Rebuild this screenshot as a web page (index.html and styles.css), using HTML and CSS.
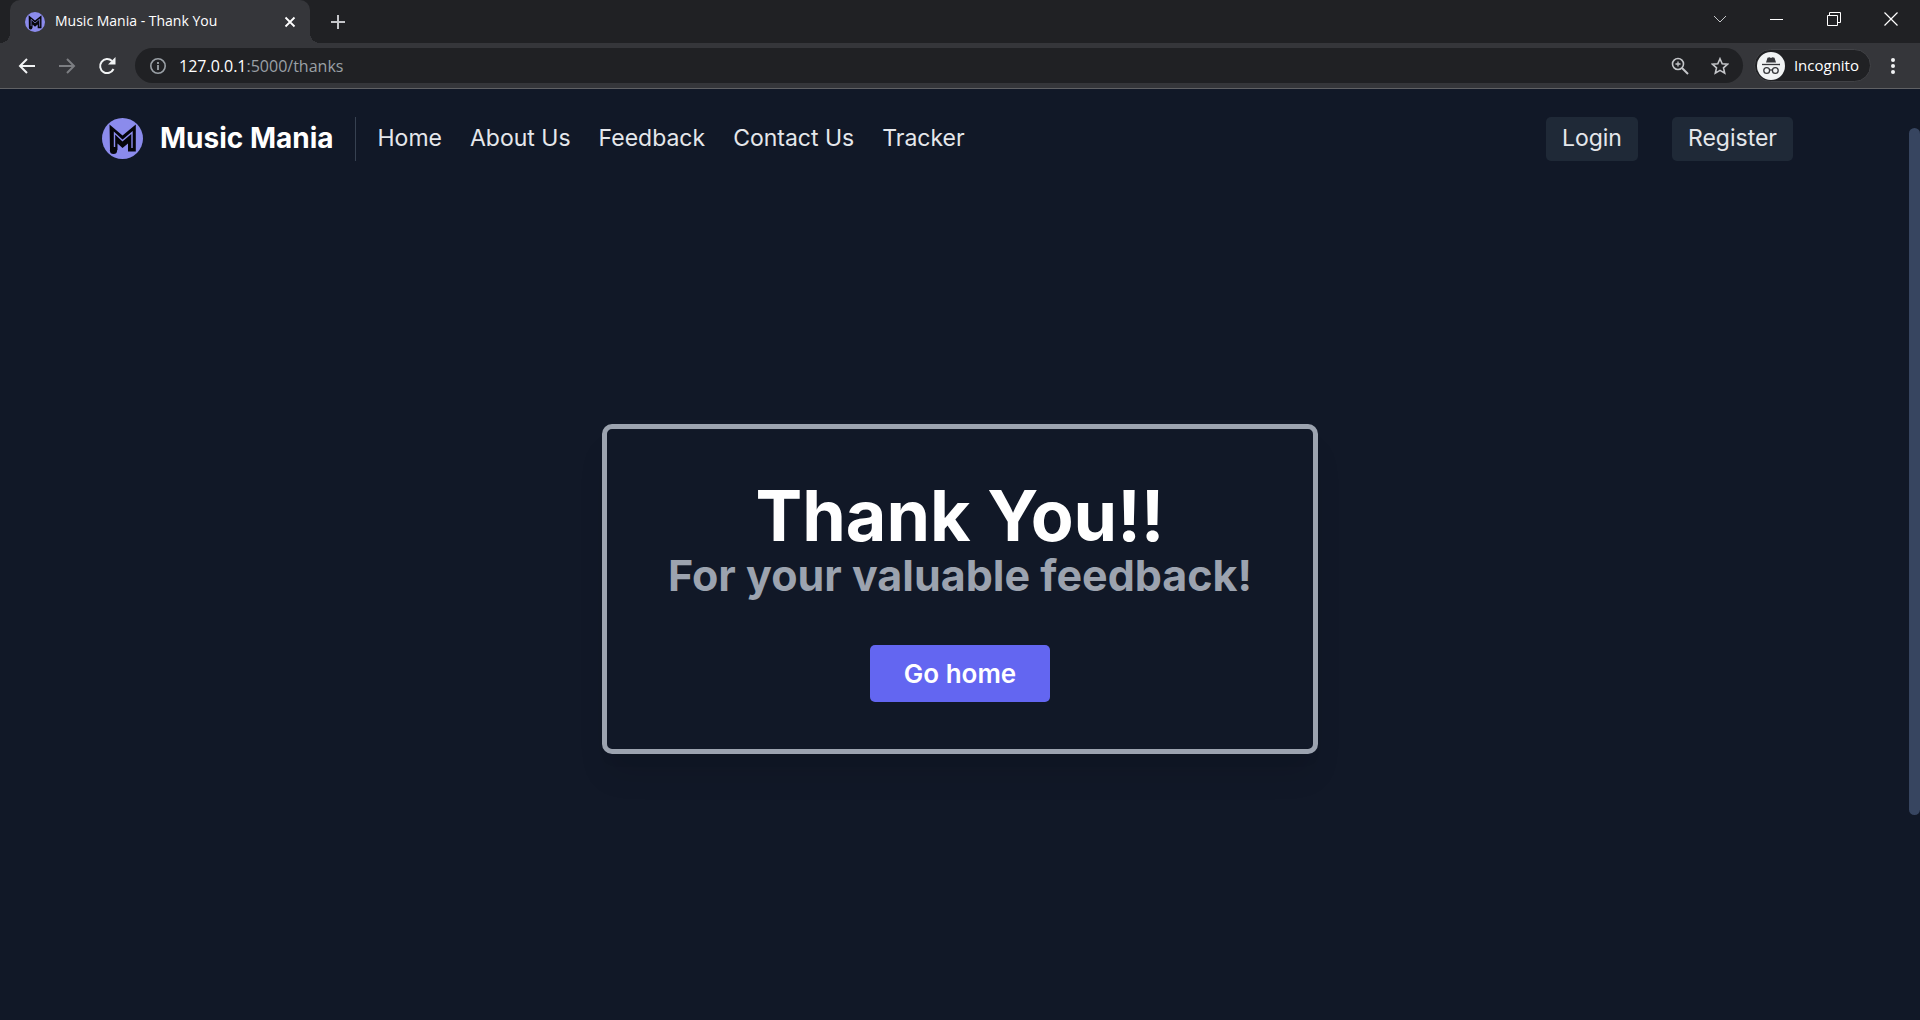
FILE: index.html
```html
<!DOCTYPE html>
<html lang="en">
<head>
<meta charset="utf-8">
<title>Music Mania - Thank You</title>
<link rel="stylesheet" href="styles.css">
</head>
<body>
<svg class="symbols" aria-hidden="true">
  <symbol id="logo" viewBox="0 0 41 41">
    <circle cx="20.500" cy="20.500" r="20.500" fill="#8b8bec"/>
    <path d="M7.500 6.500 20.500 17.500 33.800 6.500V33.500H26V25.500L20.500 30 15.500 25.500V32H8z" fill="#05050a"/>
    <circle cx="11.500" cy="32.500" r="3.600" fill="#05050a"/>
    <path d="M12.500 29V15L20.500 22.500 30 14.500V30" fill="none" stroke="#8b8bec" stroke-width="1.400"/>
  </symbol>
</svg>
<header class="browser">
  <div class="tab-strip">
    <div class="tab">
      <svg class="favicon"><use href="#logo"/></svg>
      <span class="tab-title">Music Mania - Thank You</span>
      <button class="icon-button" aria-label="Close tab"><svg width="12" height="12" viewBox="0 0 12 12"><path d="M1.500 1.500l9 9m0-9l-9 9" stroke="#fff" stroke-width="1.800"/></svg></button>
    </div>
    <button class="icon-button new-tab" aria-label="New tab"><svg width="16" height="16" viewBox="0 0 16 16"><path d="M8 1v14M1 8h14" stroke="#c4c6c9" stroke-width="2"/></svg></button>
    <div class="window-controls">
      <button class="icon-button" aria-label="Search tabs"><svg width="14" height="14" viewBox="0 0 14 14"><path d="M1 4l6 6 6-6" stroke="#c4c6c9" fill="none"/></svg></button>
      <button class="icon-button" aria-label="Minimize"><svg width="14" height="14" viewBox="0 0 14 14"><path d="M0 7.500h13" stroke="#fff"/></svg></button>
      <button class="icon-button" aria-label="Restore"><svg width="14" height="14" viewBox="0 0 14 14"><path d="M.5 3.500h10v10H.5zM2.500 3V.5h11v10H11" stroke="#fff" fill="none"/></svg></button>
      <button class="icon-button" aria-label="Close window"><svg width="14" height="14" viewBox="0 0 14 14"><path d="M.5.5l13 13m0-13l-13 13" stroke="#fff" stroke-width="1.200"/></svg></button>
    </div>
  </div>
  <div class="toolbar">
    <div class="history">
      <button class="icon-button" aria-label="Back"><svg width="18" height="18" viewBox="0 0 18 18"><path d="M17 9H2m7-7L2 9l7 7" stroke="#f1f3f4" stroke-width="2" fill="none"/></svg></button>
      <button class="icon-button" aria-label="Forward"><svg width="18" height="18" viewBox="0 0 18 18"><path d="M1 9h15M9 2l7 7-7 7" stroke="#7c7e82" stroke-width="2" fill="none"/></svg></button>
      <button class="icon-button" aria-label="Reload"><svg width="18" height="18" viewBox="0 0 18 18"><path d="M15.500 12A7 7 0 1 1 14 4" stroke="#f1f3f4" stroke-width="2" fill="none"/><path d="M17.500 0v7.500H10z" fill="#f1f3f4"/></svg></button>
    </div>
    <div class="address">
      <svg width="18" height="18" viewBox="0 0 18 18"><circle cx="9" cy="9" r="7.200" fill="none" stroke="#9aa0a6" stroke-width="1.600"/><path d="M9 8v5M9 5v2" stroke="#9aa0a6" stroke-width="1.800"/></svg>
      <span class="url"><span class="host">127.0.0.1</span>:5000/thanks</span>
      <button class="icon-button" aria-label="Zoom"><svg width="18" height="18" viewBox="0 0 18 18"><circle cx="7" cy="7" r="5.500" fill="none" stroke="#c4c6c9" stroke-width="1.600"/><path d="M11 11l6 6" stroke="#c4c6c9" stroke-width="2"/><path d="M7 4.500v5M4.500 7h5" stroke="#c4c6c9" stroke-width="1.300"/></svg></button>
      <button class="icon-button" aria-label="Bookmark"><svg width="18" height="18" viewBox="0 0 18 18"><path d="M9 1.700l2.200 5 5.400.5-4.100 3.600 1.200 5.400L9 13.400l-4.700 2.800 1.200-5.400L1.400 7.200l5.400-.5z" fill="none" stroke="#c4c6c9" stroke-width="1.600"/></svg></button>
    </div>
    <div class="incognito">
      <svg width="28" height="28" viewBox="0 0 28 28"><circle cx="14" cy="14" r="14" fill="#f1f3f4"/><path d="M9 10.500l1.500-4.800 2-.4 1.500.6 1.500-.6 2 .4L19 10.500z" fill="#35363a"/><path d="M5 12.500h18" stroke="#35363a" stroke-width="1.300"/><g fill="none" stroke="#35363a" stroke-width="1.300"><circle cx="9.700" cy="18.500" r="2.900"/><circle cx="18.300" cy="18.500" r="2.900"/><path d="M12.600 18.200q1.400-.8 2.800 0"/></g></svg>
      <span class="incognito-label">Incognito</span>
    </div>
    <button class="icon-button" aria-label="Menu"><svg width="4" height="18" viewBox="0 0 4 18"><g fill="#f1f3f4"><circle cx="2" cy="3" r="2"/><circle cx="2" cy="9" r="2"/><circle cx="2" cy="15" r="2"/></g></svg></button>
  </div>
</header>
<div class="viewport">
  <div class="page">
    <nav class="navbar">
      <a class="brand" href="#"><svg class="brand-logo"><use href="#logo"/></svg><span>Music Mania</span></a>
      <div class="links">
        <a href="#">Home</a><a href="#">About Us</a><a href="#">Feedback</a><a href="#">Contact Us</a><a href="#">Tracker</a>
      </div>
      <div class="account"><a href="#">Login</a><a href="#">Register</a></div>
    </nav>
    <main class="content">
      <section class="card">
        <h1>Thank You!!</h1>
        <h2>For your valuable feedback!</h2>
        <a class="home-button" href="#">Go home</a>
      </section>
    </main>
  </div>
  <div class="scroll-track"><div class="scroll-thumb"></div></div>
</div>
</body>
</html>
```
FILE: styles.css
```css
* { box-sizing: border-box; }
body {
  margin: 0;
  min-height: 100vh;
  display: flex;
  flex-direction: column;
  background: #111827;
  color: #e5e7eb;
  font-family: Inter, "Liberation Sans", sans-serif;
}
a { color: inherit; text-decoration: none; }
.symbols { display: none; }
.icon-button {
  display: flex;
  padding: 0;
  border: 0;
  background: none;
}

/* Browser frame */
.browser {
  background: #202124;
  border-bottom: 1px solid #606164;
  font-family: "Open Sans", "Noto Sans", sans-serif;
}
.tab-strip {
  display: flex;
  align-items: center;
  height: 43px;
  padding: 0 8px 0 10px;
}
.tab {
  position: relative;
  display: flex;
  align-items: center;
  gap: 10px;
  width: 300px;
  height: 43px;
  padding: 0 14px 0 15px;
  border-radius: 10px 10px 0 0;
  background: #35363a;
}
.tab::before,
.tab::after {
  content: "";
  position: absolute;
  bottom: 0;
  width: 10px;
  height: 10px;
}
.tab::before { right: 100%; background: radial-gradient(circle at 0 0, transparent 10px, #35363a 10px); }
.tab::after { left: 100%; background: radial-gradient(circle at 100% 0, transparent 10px, #35363a 10px); }
.favicon { width: 20px; height: 20px; }
.tab-title { flex: 1; padding-bottom: 2px; font-size: 14px; color: #fff; white-space: nowrap; }
.new-tab { margin-left: 20px; }
.window-controls {
  display: flex;
  gap: 43px;
  margin-left: auto;
  padding: 0 14px 6px 0;
}
.toolbar {
  display: flex;
  align-items: center;
  height: 45px;
  padding: 0 25px 0 18px;
  background: #35363a;
}
.history { display: flex; gap: 22px; margin-right: 19px; }
.address {
  flex: 1;
  display: flex;
  align-items: center;
  gap: 22px;
  height: 35px;
  padding: 0 14px;
  border-radius: 18px;
  background: #202124;
}
.url { flex: 1; margin-left: -10px; font-size: 16px; color: #9aa0a6; }
.host { color: #fff; }
.incognito {
  display: flex;
  align-items: center;
  gap: 9px;
  height: 33px;
  margin: 0 20px 0 11px;
  padding: 0 11px 0 2px;
  border: 1px solid #414246;
  border-radius: 17px;
  background: #202124;
  color: #fff;
  font-size: 15px;
}
.incognito-label { padding-bottom: 2px; }

/* Site */
.viewport { flex: 1; display: flex; }
.page { flex: 1; display: flex; flex-direction: column; }
.navbar {
  display: flex;
  align-items: center;
  padding: 28px 116px 28px 102px;
  font-size: 23px;
  line-height: 28px;
}
.brand {
  display: flex;
  align-items: center;
  gap: 17px;
  padding-right: 21px;
  border-right: 1px solid #374151;
  height: 44px;
  color: #fff;
  font-size: 28px;
  font-weight: 700;
}
.brand-logo { width: 41px; height: 41px; }
.links { display: flex; gap: 28px; margin-left: 22px; }
.links,
.brand { padding-bottom: 2px; }
.account { display: flex; gap: 34px; margin-left: auto; }
.account a {
  padding: 7px 16px 9px;
  border-radius: 5px;
  background: #1f2937;
}
.content {
  flex: 1;
  display: flex;
  justify-content: center;
  align-items: center;
  padding: 0 0 32px 11px;
}
.card {
  display: flex;
  flex-direction: column;
  align-items: center;
  padding: 52px 61px 47px;
  border: 5px solid #9ca3af;
  border-radius: 10px;
  box-shadow: 0 25px 31px -6px rgba(0, 0, 0, .1), 0 12px 12px -6px rgba(0, 0, 0, .04);
}
h1, h2 { margin: 0; font-weight: 700; white-space: nowrap; }
h1 { color: #fff; font-size: 70px; line-height: 70px; }
h2 { color: #9ca3af; font-size: 43px; line-height: 48px; }
.home-button {
  margin-top: 46px;
  padding: 14px 34px;
  border-radius: 5px;
  background: #6366f1;
  color: #fff;
  font-size: 26px;
  line-height: 29px;
  font-weight: 600;
}
.scroll-track { width: 11px; padding-top: 39px; }
.scroll-thumb { height: 77%; border-radius: 6px; background: #374560; }
```
